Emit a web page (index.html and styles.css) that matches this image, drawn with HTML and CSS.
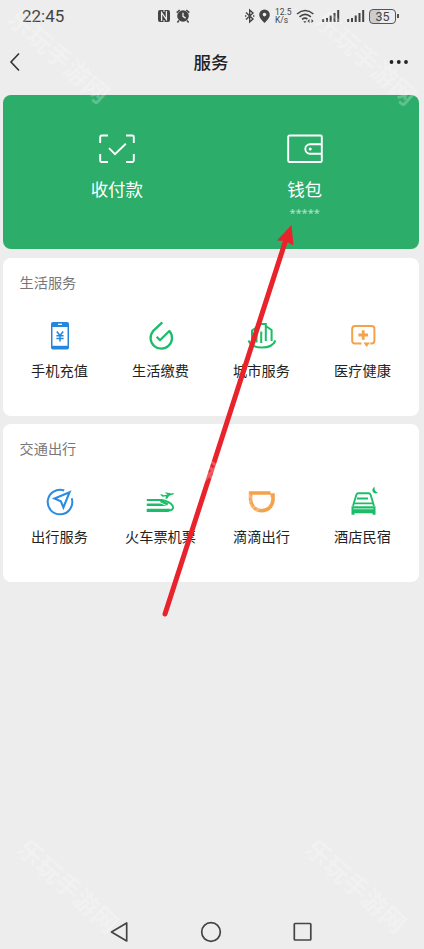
FILE: index.html
```html
<!DOCTYPE html>
<html lang="zh-CN">
<head>
<meta charset="utf-8">
<title>服务</title>
<link rel="stylesheet" href="styles.css">
</head>
<body>
<div class="screen">
  <header class="status">
    <span class="clock">22:45</span>
    <svg class="status-mid" width="34" height="16" viewBox="0 0 34 16">
      <rect x="1" y="2" width="12" height="12" rx="2" fill="#444"/>
      <path d="M4.600 13V4.500L9.400 11.500V3" fill="none" stroke="#eee" stroke-width="1.300"/>
      <path d="M7 1v3M7 12v3" stroke="#eee" stroke-width="1"/>
      <circle cx="26" cy="8" r="5.800" fill="#444"/>
      <path d="M19.700 4.600l3-2.600M32.300 4.600l-3-2.600M22 12.500l-1.600 2M30 12.500l1.600 2" stroke="#444" stroke-width="1.500"/>
      <path d="M26 4.700V8.300l2.600 1.800" fill="none" stroke="#eee" stroke-width="1.300"/>
    </svg>
    <div class="status-right">
      <svg width="28" height="16" viewBox="0 0 28 16">
        <path d="M2 4.500l7 6.500-3.300 3V2L9 5 2 11.500M1 8h1.400M9 8h1.400" fill="none" stroke="#444" stroke-width="1.400"/>
        <path d="M20.500 1.500a5.300 5.300 0 0 1 5.300 5.400c0 3-2.700 5-5.300 8-2.600-3-5.300-5-5.300-8a5.300 5.300 0 0 1 5.300-5.400z" fill="#444"/>
        <circle cx="20.500" cy="6.600" r="1.800" fill="#eee"/>
      </svg>
      <span class="speed"><span>12.5</span><span>K/s</span></span>
      <svg class="radio" width="70" height="16" viewBox="0 0 70 16">
        <g fill="none" stroke="#444" stroke-width="1.600">
          <path d="M1 6q8.200-7 16.400 0M3.500 8.800q5.700-4.800 11.400 0M6 11.400q3-2.300 5.400-.4"/>
        </g>
        <path d="M7.200 13.200h3.400L8.900 15zM11.500 13l2-2v4zM17.500 13l-2-2v4z" fill="#444"/>
        <path d="M27.200 14v-3M31 14v-4M34.700 14V7.500M38.500 14V5M42.200 14V2M52.200 14v-3M56 14v-4M59.700 14V7.500M63.500 14V5M67.200 14V2" stroke="#444" stroke-width="2"/>
      </svg>
      <span class="battery">35</span>
    </div>
  </header>

  <nav class="navbar">
    <svg width="20" height="20" viewBox="0 0 20 20"><path d="M13 1.500L5 10l8 8.500" fill="none" stroke="#333" stroke-width="1.600"/></svg>
    <h1 class="title">服务</h1>
    <svg width="20" height="20" viewBox="0 0 20 20"><g fill="#222"><circle cx="2.500" cy="10" r="1.900"/><circle cx="9.800" cy="10" r="1.900"/><circle cx="17" cy="10" r="1.900"/></g></svg>
  </nav>

  <main class="content">
    <section class="pay">
      <div class="pay-item">
        <svg width="36" height="30" viewBox="0 0 36 30" fill="none" stroke="#fff" stroke-width="1.900">
          <path d="M1.200 9V3q0-1.500 1.500-1.500H9M27 1.500h6.300q1.500 0 1.500 1.500v6M34.800 20v6.500q0 1.500-1.500 1.500H27M9 28H2.700q-1.500 0-1.500-1.500V20"/>
          <path d="M10 14.200l6 6L26.800 9.800"/>
        </svg>
        <span class="pay-label">收付款</span>
      </div>
      <div class="pay-item">
        <svg width="36" height="30" viewBox="0 0 36 30" fill="none" stroke="#fff" stroke-width="1.900">
          <rect x="1.200" y="1.500" width="33.600" height="26.500" rx="1.300"/>
          <path d="M34.500 10.300H23a4.700 4.700 0 0 0 0 9.400h11.500"/>
          <circle cx="23.200" cy="15" r="1.500" fill="#fff" stroke="none"/>
        </svg>
        <span class="pay-label">钱包</span>
        <span class="pay-mask">*****</span>
      </div>
    </section>

    <section class="card">
      <h2 class="card-title">生活服务</h2>
      <div class="grid">
        <div class="item">
          <svg class="icon" viewBox="0 0 34 34">
            <rect x="8" y="3" width="18" height="27.500" rx="2" fill="#2686dc"/>
            <rect x="9.500" y="8" width="15" height="18.800" fill="#fff"/>
            <path d="M15 5.300h4" stroke="#fff" stroke-width="1.200"/>
            <path d="M13.800 12.500l3.200 4 3.200-4M17 16.500v6M13.400 16.800h7.200M13.400 19.600h7.200" fill="none" stroke="#2686dc" stroke-width="1.500"/>
          </svg>
          <span>手机充值</span>
        </div>
        <div class="item">
          <svg class="icon" viewBox="0 0 34 34">
            <path d="M18.300 3.300L9 12.200A10.700 10.700 0 1 0 25.400 12L16 21.300l-3.300-3.500" fill="none" stroke="#1cbd69" stroke-width="2.300" stroke-linejoin="round"/>
          </svg>
          <span>生活缴费</span>
        </div>
        <div class="item">
          <svg class="icon" viewBox="0 0 34 34" fill="none" stroke="#1cbd69" stroke-width="2">
            <path d="M3.500 21.500q3 7 13.500 7t13.500-7"/>
            <path d="M7 22V11.500l9.200-6.600h4.600V22M11.500 23.500V13M16.200 24V12.500M20.800 7l5.800 4V22"/>
          </svg>
          <span>城市服务</span>
        </div>
        <div class="item">
          <svg class="icon" viewBox="0 0 34 34" fill="none" stroke="#f4a24b" stroke-width="2">
            <path d="M15.500 24.500H9q-2.800 0-2.800-2.800V9.800Q6.200 7 9 7h16.600q2.800 0 2.800 2.800v11.900q0 2.800-2.800 2.800h-1.400"/>
            <path d="M17.500 23.500h6.500L20.600 28z" fill="#f4a24b" stroke="none"/>
            <path d="M17.200 11.200v9.600M12.400 16h9.600" stroke-width="2.800"/>
          </svg>
          <span>医疗健康</span>
        </div>
      </div>
    </section>

    <section class="card">
      <h2 class="card-title">交通出行</h2>
      <div class="grid">
        <div class="item">
          <svg class="icon" viewBox="0 0 34 34" fill="none" stroke="#2b8ce2" stroke-width="2">
            <path d="M21.200 5.500A12.300 12.300 0 1 0 28.700 13.300"/>
            <path d="M26.600 7.200L11.500 13.500l6.300 2.700 2.600 6.300z" stroke-width="2.100"/>
          </svg>
          <span>出行服务</span>
        </div>
        <div class="item">
          <svg class="icon" viewBox="0 0 34 34">
            <path d="M2.800 15H18q7.500 1.300 10.500 5.500 2 4-3 5.200H2.800" fill="none" stroke="#1cbd69" stroke-width="1.800"/>
            <path d="M2.800 23.800h23.500l-1.800 3.200H2.800zM2.800 18.500h14l5.700 2.500H2.800zM17 14.500l7.500 4-1.500 2-7-3.500z" fill="#1cbd69"/>
            <path d="M16 9.500l1.500-.3 2.500 1 3.600-.8-3-2h2.200l4.800 1.200 2.400-.9-.8 1.800-4 1.300-2 3h-1.800l.5-2.500-3.400.4z" fill="#1cbd69"/>
          </svg>
          <span>火车票机票</span>
        </div>
        <div class="item">
          <svg class="icon" viewBox="0 0 34 34" fill="none" stroke="#f4a24b" stroke-width="3.600">
            <path d="M25.500 8H5.600v6.500A11.200 11.200 0 0 0 28 14.500V10h-2.500"/>
          </svg>
          <span>滴滴出行</span>
        </div>
        <div class="item">
          <svg class="icon" viewBox="0 0 34 34">
            <path d="M7 21l3.300-11q.6-1.700 2-1.700h10.400q1.400 0 2 1.700L28 21M11 13.500h11" fill="none" stroke="#1cbd69" stroke-width="1.900"/>
            <path d="M8.500 17.500h18l.8 1.700H7.700zM5.500 21.300h24v8.400h-3v-1.500h-18v1.500h-3z" fill="#1cbd69"/>
            <path d="M7.500 23.800h20" stroke="#fff" stroke-width=".7"/>
            <path d="M28.700 1.800q-.9 4.600 3.300 6-3.500 1.800-5.300-1-1.300-3.200 2-5z" fill="#1cbd69"/>
          </svg>
          <span>酒店民宿</span>
        </div>
      </div>
    </section>
  </main>

  <footer class="system-nav">
    <svg width="22" height="22" viewBox="0 0 22 22"><path d="M17.700 2v18L2.500 11z"/></svg>
    <svg width="22" height="22" viewBox="0 0 22 22"><circle cx="11" cy="11" r="9.300"/></svg>
    <svg width="22" height="22" viewBox="0 0 22 22"><rect x="2.300" y="2.500" width="16.500" height="16.500" rx=".8"/></svg>
  </footer>

  <svg class="arrow" viewBox="0 0 424 949">
    <path d="M165 614L285.500 241" stroke="#e8232b" stroke-width="5" stroke-linecap="round"/>
    <path d="M291.500 225L277 240.500l8.500.5 8 4.500z" fill="#e8232b"/>
  </svg>
  <div class="mark mark-tl">乐玩手游网</div>
  <div class="mark mark-tr">乐玩手游网</div>
  <div class="mark mark-mid">乐玩手游网</div>
  <div class="mark mark-bl">乐玩手游网</div>
  <div class="mark mark-br">乐玩手游网</div>
</div>
</body>
</html>
```
FILE: styles.css
```css
* { box-sizing: border-box; }
body {
  margin: 0;
  background: #ededed;
  font-family: "Noto Sans CJK SC", sans-serif;
  color: #222;
}
svg { display: block; flex: none; }
.screen {
  position: relative;
  width: 424px;
  height: 949px;
  overflow: hidden;
  display: flex;
  flex-direction: column;
}
.status {
  height: 32px;
  display: flex;
  align-items: center;
  padding: 0 28px 0 22px;
  font-family: Roboto, sans-serif;
  color: #444;
}
.clock { width: 135px; font-size: 17px; line-height: 20px; }
.status-right { display: flex; align-items: center; margin-left: auto; }
.speed {
  display: flex;
  flex-direction: column;
  width: 18px;
  margin-left: 3px;
  font-size: 8.500px;
  line-height: 8.500px;
}
.radio { margin-left: 3px; }
.battery {
  position: relative;
  width: 27px;
  height: 15px;
  margin-left: 3px;
  border: 1.500px solid #555;
  border-radius: 4px;
  background: linear-gradient(90deg, #ccc 40%, #ededed 40%);
  font-size: 12.500px;
  line-height: 13px;
  text-align: center;
}
.battery::after {
  content: "";
  position: absolute;
  right: -4px;
  top: 4px;
  width: 2px;
  height: 4px;
  background: #555;
}
.navbar {
  height: 60px;
  display: flex;
  align-items: center;
  justify-content: space-between;
  padding: 0 15px 0 6px;
}
.title { margin: 0 0 0 7px; font-size: 17.500px; font-weight: 500; line-height: 24px; }
.content {
  display: flex;
  flex-direction: column;
  gap: 8.500px;
  padding: 3px 5.500px 0 3px;
}
.pay {
  height: 154px;
  display: grid;
  grid-template-columns: 1fr 1fr;
  padding: 39px 20px 0;
  border-radius: 8px;
  background: #2cad69;
  color: #fff;
}
.pay-item { display: flex; flex-direction: column; align-items: center; }
.pay-label { margin-top: 12px; font-size: 17.500px; line-height: 26px; }
.pay-mask {
  margin-top: 2px;
  font-family: "Noto Sans", sans-serif;
  font-size: 11px;
  line-height: 18px;
  opacity: .65;
}
.card { height: 158px; padding: 13px 5.500px 0 6px; border-radius: 8px; background: #fff; }
.card-title {
  margin: 0 0 0 10.500px;
  font-size: 14.200px;
  font-weight: 400;
  line-height: 22px;
  color: #777;
}
.grid { display: grid; grid-template-columns: repeat(4, 101px); margin-top: 26px; }
.item {
  display: flex;
  flex-direction: column;
  align-items: center;
  gap: 7px;
  font-size: 14.200px;
  line-height: 20px;
}
.icon { width: 34px; height: 34px; }
.system-nav {
  display: flex;
  justify-content: center;
  gap: 69.500px;
  margin: auto 0 6px;
  padding-right: 2px;
}
.system-nav svg { fill: none; stroke: #444; stroke-width: 1.700; stroke-linejoin: round; }
.arrow { position: absolute; inset: 0; width: 424px; height: 949px; }
.mark {
  position: absolute;
  width: 130px;
  height: 30px;
  font-size: 25px;
  font-weight: 700;
  line-height: 30px;
  text-align: center;
  white-space: nowrap;
  color: rgba(255, 255, 255, .25);
  transform: rotate(42deg);
}
.mark-tl { left: -5px; top: 40px; }
.mark-tr { left: 302px; top: 42px; }
.mark-mid { left: 147px; top: 457px; }
.mark-bl { left: 4px; top: 870px; }
.mark-br { left: 292px; top: 870px; }
```
